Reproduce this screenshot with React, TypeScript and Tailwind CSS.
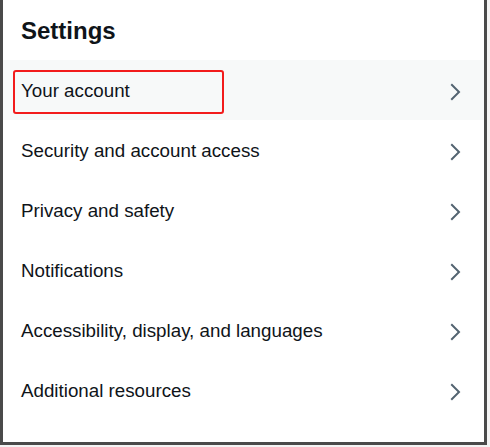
const ITEMS = [
  'Your account',
  'Security and account access',
  'Privacy and safety',
  'Notifications',
  'Accessibility, display, and languages',
  'Additional resources',
];

function Chevron() {
  return (
    <svg viewBox="0 0 24 24" className="h-6 w-6 shrink-0 fill-[#536471]">
      <path d="M14.586 12L7.543 4.96l1.414-1.42L17.414 12l-8.457 8.46-1.414-1.42L14.586 12z" />
    </svg>
  );
}

export default function App() {
  return (
    <div className="h-[447px] w-[490px] bg-[#f4f4f4]" style={{ fontFamily: '"Liberation Sans", Arial, sans-serif' }}>
      <div className="flex h-[445px] w-[487px] flex-col border-b-[3px] border-l-[3px] border-r-[3px] border-[#4a4a4a] bg-white">
        <div className="flex h-[60px] shrink-0 items-center px-[18px] pt-[2px]">
          <h1 className="text-[24px] font-bold leading-none text-[#0f1419]">Settings</h1>
        </div>
        <div className="flex flex-col">
          {ITEMS.map((label, i) => (
            <div key={label} className={`flex h-[60px] items-center justify-between pl-[18px] pr-[17px] pt-[3px] ${i === 0 ? 'bg-[#f7f9f9]' : ''}`}>
              <div className={`flex items-center ${i === 0 ? 'h-[44px] w-[211px] -ml-[8px] rounded-[3px] border-2 border-[#f21c1c] pl-[6px]' : ''}`}>
                <span className="text-[18.75px] text-[#0f1419]">{label}</span>
              </div>
              <Chevron />
            </div>
          ))}
        </div>
      </div>
    </div>
  );
}
